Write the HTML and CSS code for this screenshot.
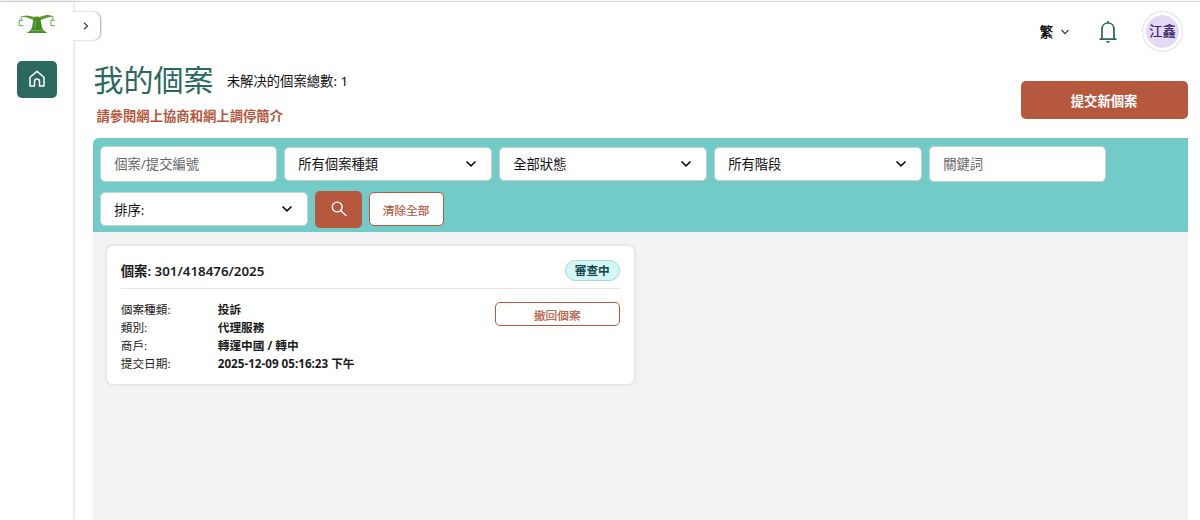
FILE: index.html
```
<!DOCTYPE html>
<html lang="zh-Hant">
<head>
    <meta charset="UTF-8">
    <meta name="viewport" content="width=device-width, initial-scale=1.0">
    <title>我的個案</title>
    <link rel="stylesheet" href="styles.css">
</head>
<body>
    <div class="layout">
        <nav class="sidebar">
            <svg class="logo" viewBox="0 0 38 20" width="38" height="20">
                <path d="M1.5 2.2 L9 1.6 L17 3 Q19 1.6 21 3 L29 .8 L36.5 2.2 L29 3.8 L22.500 6 H15.500 L9 3.600 Z" fill="#5b9a2f"/>
                <path d="M15.800 4 H22.200 L24 13.500 Q25 16.500 29.500 19 H8.500 Q13 16.500 14 13.500 Z" fill="#438c22"/>
                <path d="M17.600 7 L16.600 14 M12.500 16.600 H25.500" stroke="#a5cb88" stroke-width=".6" fill="none"/>
                <path d="M3.200 3 V6 M5 6.300 H1.200 V11.600 H5.300 M34.800 3 V6 M36.700 6.300 H32.900 V11.600 H37" stroke="#6aa646" stroke-width="1" fill="none"/>
            </svg>
            <a class="nav-item" href="#">
                <svg viewBox="0 0 18 18" width="18" height="18" fill="none" stroke="#fff" stroke-width="1.5" stroke-linejoin="round">
                    <path d="M2 7.3 L9 1.4 L16 7.3 V16 H11.5 V11.4 A2.5 2.5 0 0 0 6.5 11.4 V16 H2 Z"/>
                </svg>
            </a>
            <button class="toggle">
                <svg viewBox="0 0 6 8" width="6" height="8" fill="none" stroke="#444" stroke-width="1.3"><path d="M1 .8 L4.5 4 L1 7.2"/></svg>
            </button>
        </nav>
        <main class="main">
            <header class="topbar">
                <div class="language">繁
                    <svg viewBox="0 0 8 6" width="8" height="6" fill="none" stroke="#333" stroke-width="1.1"><path d="M.6 1 L4 4.600 L7.400 1"/></svg>
                </div>
                <svg class="bell" viewBox="0 0 18 24" width="18" height="24" fill="none" stroke="#2b685e" stroke-width="1.7">
                    <path d="M.5 19.200 H17.500 M3 19 V9.300 C3 5.500 5.500 3 9 3 C12.500 3 15 5.500 15 9.300 V19 M9 3 V1"/>
                    <path d="M7 21 H11 L10 22.800 H8 Z" fill="#2b685e" stroke="none"/>
                </svg>
                <div class="avatar">江鑫</div>
            </header>
            <div class="heading">
                <div>
                    <div class="title-row">
                        <h1>我的個案</h1>
                        <span class="total">未解决的個案總數: 1</span>
                    </div>
                    <a class="intro" href="#">請參閱網上協商和網上調停簡介</a>
                </div>
                <button class="submit-case">提交新個案</button>
            </div>
            <section class="cases">
                <form class="filters">
                    <input type="text" placeholder="個案/提交編號">
                    <div class="select">所有個案種類<svg viewBox="0 0 12 8" width="12" height="8"><path d="M1.500 1.500 L6 5.800 L10.500 1.500"/></svg></div>
                    <div class="select">全部狀態<svg viewBox="0 0 12 8" width="12" height="8"><path d="M1.500 1.500 L6 5.800 L10.500 1.500"/></svg></div>
                    <div class="select">所有階段<svg viewBox="0 0 12 8" width="12" height="8"><path d="M1.500 1.500 L6 5.800 L10.500 1.500"/></svg></div>
                    <input type="text" placeholder="關鍵詞">
                    <div class="select">排序:<svg viewBox="0 0 12 8" width="12" height="8"><path d="M1.500 1.500 L6 5.800 L10.500 1.500"/></svg></div>
                    <button type="button" class="search">
                        <svg viewBox="0 0 16 16" width="16" height="16" fill="none" stroke="#fff" stroke-width="1.4"><circle cx="6.200" cy="6" r="4.900"/><path d="M9.700 9.500 L15.300 15.100"/></svg>
                    </button>
                    <button type="button" class="clear">清除全部</button>
                </form>
                <article class="card">
                    <div class="card-header">
                        <h2>個案: 301/418476/2025</h2>
                        <span class="status">審查中</span>
                    </div>
                    <div class="card-body">
                        <dl>
                            <dt>個案種類:</dt><dd>投訴</dd>
                            <dt>類別:</dt><dd>代理服務</dd>
                            <dt>商戶:</dt><dd>轉運中國 / 轉中</dd>
                            <dt>提交日期:</dt><dd>2025-12-09 05:16:23 下午</dd>
                        </dl>
                        <button class="withdraw">撤回個案</button>
                    </div>
                </article>
            </section>
        </main>
    </div>
</body>
</html>
```

FILE: styles.css
```
* {
    box-sizing: border-box;
}

body {
    margin: 0;
    font-family: "Noto Sans", "Noto Sans CJK TC", sans-serif;
    font-size: 13.33px;
    color: #1c1c1c;
    background: #fff;
    overflow: hidden;
}

button, input {
    font-family: inherit;
    font-size: inherit;
    padding: 0;
}

.layout {
    display: flex;
    height: 520px;
    border-top: 1px solid #f4f4f4;
    box-shadow: inset 0 1px 0 #d5d5d5;
}

.sidebar {
    position: relative;
    width: 73px;
    flex-shrink: 0;
    margin-top: 1px;
    padding-top: 12px;
    display: flex;
    flex-direction: column;
    align-items: center;
    box-shadow: 1px 0 3px rgba(0, 0, 0, 0.15);
}

.logo {
    display: block;
}

.nav-item {
    width: 40px;
    height: 37px;
    margin-top: 26.6px;
    border-radius: 5px;
    background: #2b685e;
    display: flex;
    align-items: center;
    justify-content: center;
}

.toggle {
    position: absolute;
    left: 73px;
    top: 10px;
    width: 27px;
    height: 28px;
    padding-right: 1px;
    border: none;
    border-radius: 0 7px 7px 0;
    background: #fff;
    box-shadow: 1px 0 2px rgba(0, 0, 0, 0.35);
    display: flex;
    align-items: center;
    justify-content: center;
}

.main {
    flex: 1;
    display: flex;
    flex-direction: column;
    padding: 0 12.4px 0 20.4px;
}

.topbar {
    height: 60px;
    padding: 1px 5.6px 0 0;
    display: flex;
    align-items: center;
    justify-content: flex-end;
}

.language {
    display: flex;
    align-items: center;
    gap: 8px;
    font-family: "Noto Sans CJK TC", sans-serif;
    color: #000;
    -webkit-text-stroke: 0.3px;
}

.bell {
    margin: 1px 26.500px 0 29.500px;
}

.avatar {
    width: 39px;
    height: 39px;
    border: 3px solid #fff;
    border-radius: 50%;
    background: #e3d9f5;
    background-clip: padding-box;
    box-shadow: 0 0 2px rgba(0, 0, 0, 0.35);
    color: #33205f;
    line-height: 33px;
    text-align: center;
    -webkit-text-stroke: 0.2px;
}

.heading {
    display: flex;
    justify-content: space-between;
    height: 77.4px;
}

.title-row {
    display: flex;
    align-items: center;
    gap: 13.4px;
    height: 38px;
}

h1 {
    margin: 0;
    font-size: 30px;
    font-weight: 400;
    line-height: 38px;
    color: #2b685e;
}

.total {
    color: #111;
}

.intro {
    display: block;
    margin: 7px 0 0 3px;
    line-height: 20px;
    font-weight: 700;
    color: #b5573c;
    text-decoration: none;
}

.submit-case {
    width: 167px;
    height: 37.4px;
    margin-top: 20.4px;
    border: none;
    border-radius: 5px;
    background: #b5583d;
    color: #fff;
    font-weight: 700;
}

.cases {
    flex: 1;
    background: #f2f3f5;
    border-radius: 6px 0 0 0;
    overflow: hidden;
}

.filters {
    display: flex;
    flex-wrap: wrap;
    align-items: center;
    align-content: flex-start;
    gap: 9px 7.3px;
    height: 94px;
    padding: 7.200px 7px 0 6.800px;
    background: #73cbc7;
}

.filters input,
.select {
    border: 1px solid #bed3d2;
    border-radius: 5px;
    background: #fff;
}

.filters input {
    width: 176.7px;
    height: 36px;
    padding: 0 13px;
}

.filters input::placeholder {
    color: #666;
}

.select {
    width: 207.7px;
    height: 34px;
    padding: 0 13.400px 0 13px;
    display: flex;
    align-items: center;
    justify-content: space-between;
    color: #111;
}

.select svg {
    fill: none;
    stroke: #111;
    stroke-width: 1.7;
}

.search {
    width: 47px;
    height: 37px;
    border: none;
    border-radius: 5px;
    background: #b5583d;
    display: flex;
    align-items: center;
    justify-content: center;
}

.clear,
.withdraw {
    border: 1px solid #b5583d;
    border-radius: 5px;
    background: #fff;
    color: #b5583d;
    font-size: 11.67px;
    -webkit-text-stroke: 0.2px;
}

.clear {
    width: 75px;
    height: 34px;
    margin-left: -0.8px;
}

.card {
    width: 529px;
    height: 140px;
    margin: 13px 0 0 12.400px;
    padding: 9px 14px 0 14px;
    border: 1px solid #e4e5e7;
    border-radius: 7px;
    background: #fff;
    box-shadow: 0 0 3px rgba(0, 0, 0, 0.1);
}

.card-header {
    display: flex;
    align-items: center;
    justify-content: space-between;
    height: 34px;
    padding-bottom: 2px;
    border-bottom: 1px solid #e4e8ec;
}

h2 {
    margin: 0;
    font-size: 13.33px;
    font-weight: 600;
}

.status {
    height: 21px;
    padding: 0 9px;
    border: 1px solid #a5d8d5;
    border-radius: 11px;
    background: #d2f7f4;
    color: #14474b;
    font-size: 11.67px;
    font-weight: 700;
    line-height: 19px;
}

.card-body {
    display: flex;
    justify-content: space-between;
    align-items: flex-start;
    padding-top: 12px;
}

dl {
    display: grid;
    grid-template-columns: 97px auto;
    grid-auto-rows: 18px;
    margin: 0;
    font-size: 11.67px;
    line-height: 18px;
}

dd {
    margin: 0;
    font-weight: 700;
}

.withdraw {
    width: 125px;
    height: 24px;
    margin-top: 1px;
}
```
